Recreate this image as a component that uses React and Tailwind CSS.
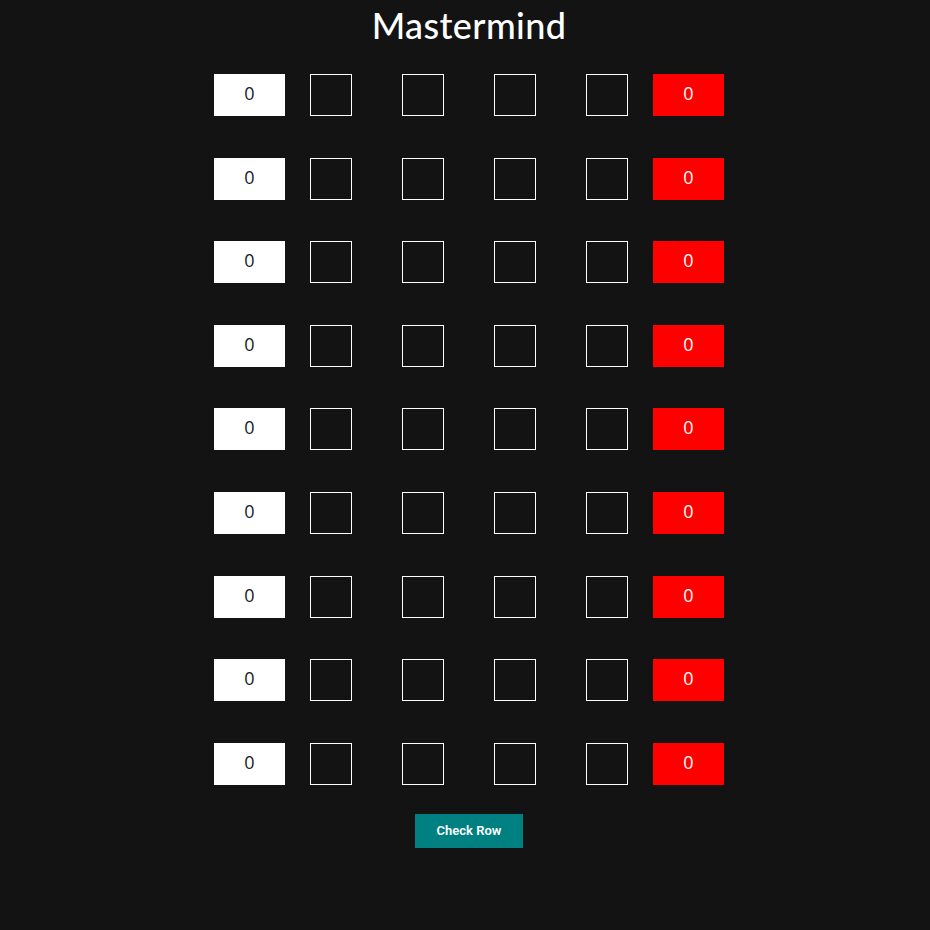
const ROWS = 9;
const COLS = 4;

function Row() {
  return (
    <div className="flex items-center">
      <div className="w-[71px] h-[42px] bg-white text-[#1a1a2a] flex items-center justify-center pb-[3px] text-[18px] font-normal font-['Open_Sans',sans-serif]">
        0
      </div>
      {Array.from({ length: COLS }).map((_, i) => (
        <div key={i} className="w-[42px] h-[42px] mx-[25px] border border-white bg-transparent" />
      ))}
      <div className="w-[71px] h-[42px] bg-[#ff0000] text-white flex items-center justify-center pb-[3px] text-[18px] font-normal font-['Open_Sans',sans-serif]">
        0
      </div>
    </div>
  );
}

export default function App() {
  return (
    <div className="min-h-[930px] bg-[#131313] pl-[8px] flex flex-col items-center">
      <h1 className="mt-[3px] text-white text-[36px] leading-[44px] font-medium tracking-[0.4px] font-['Lato',sans-serif]">
        Mastermind
      </h1>
      <div className="mt-[27px] flex flex-col gap-[41.6px]">
        {Array.from({ length: ROWS }).map((_, i) => (
          <Row key={i} />
        ))}
      </div>
      <button className="mt-[29px] w-[108px] h-[34px] bg-[#008080] text-white text-[13px] font-semibold font-['Roboto',Arial,sans-serif]">
        Check Row
      </button>
    </div>
  );
}
